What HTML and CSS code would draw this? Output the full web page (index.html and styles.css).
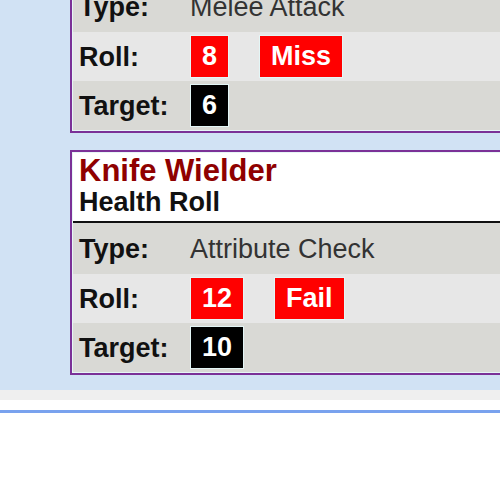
FILE: index.html
```html
<!DOCTYPE html>
<html lang="en">
<head>
    <meta charset="UTF-8">
    <meta name="viewport" content="width=device-width, initial-scale=1.0">
    <title>Roll Log</title>
    <link rel="stylesheet" href="styles.css">
</head>
<body>
    <!-- Scrolled roll log -->
    <div class="log">
        <div class="log-inner">
            <div class="card">
                <div class="card-head">
                    <div class="actor">Knife Wielder</div>
                    <div class="roll-name">Attack Roll</div>
                </div>
                <div class="row dark">
                    <span class="label">Type:</span>
                    <span class="value">Melee Attack</span>
                </div>
                <div class="row light">
                    <span class="label">Roll:</span>
                    <div class="value">
                        <span class="badge red">8</span>
                        <span class="badge red">Miss</span>
                    </div>
                </div>
                <div class="row dark">
                    <span class="label">Target:</span>
                    <div class="value">
                        <span class="badge black">6</span>
                    </div>
                </div>
            </div>

            <div class="card">
                <div class="card-head">
                    <div class="actor">Knife Wielder</div>
                    <div class="roll-name">Health Roll</div>
                </div>
                <div class="row dark">
                    <span class="label">Type:</span>
                    <span class="value">Attribute Check</span>
                </div>
                <div class="row light">
                    <span class="label">Roll:</span>
                    <div class="value">
                        <span class="badge red">12</span>
                        <span class="badge red">Fail</span>
                    </div>
                </div>
                <div class="row dark">
                    <span class="label">Target:</span>
                    <div class="value">
                        <span class="badge black">10</span>
                    </div>
                </div>
            </div>
        </div>
    </div>

    <!-- Status bar and input panel -->
    <div class="status"></div>
    <div class="panel"></div>
</body>
</html>
```

FILE: styles.css
```css
/* General styling */
body {
    margin: 0;
    font-family: "Liberation Sans", Arial, sans-serif;
    background-color: #fff;
    overflow: hidden;
}

/* Log area */
.log {
    background-color: #d1e2f4;
    padding: 0 0 15px 70px;
    overflow: hidden;
}

.log-inner {
    margin-top: -92px;
    display: flex;
    flex-direction: column;
    gap: 17px;
}

/* Roll cards */
.card {
    width: 480px;
    border: 2px solid #7b3197;
    padding: 1px;
    background-color: #e6f6f6;
}

.card-head {
    background-color: #fff;
    padding: 0 6px 4px;
    height: 64px;
    border-bottom: 2px solid #111;
}

.actor {
    color: #8f0000;
    font-size: 31px;
    font-weight: bold;
    line-height: 35px;
}

.roll-name {
    color: #111;
    font-size: 27px;
    font-weight: bold;
    line-height: 29px;
}

/* Rows */
.row {
    display: grid;
    grid-template-columns: 111px 1fr;
    align-items: center;
    height: 49px;
    padding-left: 6px;
    font-size: 27px;
    line-height: 30px;
}

.row:nth-child(2) {
    height: 51px;
}

.dark {
    background-color: #d9d9d5;
}

.light {
    background-color: #e7e7e7;
}

.label {
    color: #111;
    font-weight: bold;
}

.value {
    color: #333;
    display: flex;
    gap: 30px;
    white-space: nowrap;
}

/* Result badges */
.badge {
    display: inline-block;
    height: 41px;
    line-height: 41px;
    padding: 0 11px;
    border: 1px solid #e4f6f6;
    color: #fff;
    font-weight: bold;
}

.red {
    background-color: #ff0000;
}

.black {
    background-color: #000;
}

/* Bottom area */
.status {
    height: 10px;
    background-color: #efefef;
}

.panel {
    margin-top: 10px;
    border-top: 3px solid #79a2ee;
    height: 90px;
}
```
